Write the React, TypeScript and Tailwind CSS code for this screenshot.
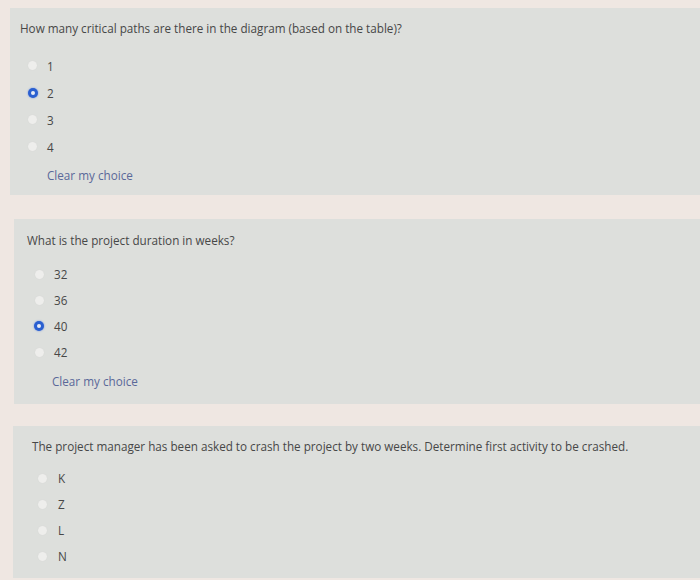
import React from "react";

function Radio({ checked }: { checked?: boolean }) {
  if (checked) {
    return (
      <span className="flex h-[10px] w-[10px] items-center justify-center rounded-full bg-[#2a5fd0] shadow-[0_0_2px_#6d8fe0]">
        <span className="h-[4px] w-[4px] rounded-full bg-[#e8ecf6]" />
      </span>
    );
  }
  return <span className="block h-[9px] w-[9px] rounded-full bg-[#eeeeec] shadow-[0_0_1px_#cfd0ce]" />;
}

export default function App() {
  return (
    <div
      className="flex h-[580px] w-[700px] flex-col bg-[#efe7e2] text-[11.7px] leading-[16px] text-[#474747]"
      style={{ fontFamily: "'Open Sans', 'Liberation Sans', sans-serif" }}
    >
      {/* Card 1 */}
      <div className="ml-[10px] mt-[8px] flex flex-col bg-[#dddfdc] pb-[12px] pl-[10px] pt-[12px]">
        <div>How many critical paths are there in the diagram (based on the table)?</div>
        <div className="mt-[16px] flex flex-col">
          {["1", "2", "3", "4"].map((l) => (
            <div key={l} className="flex h-[27px] items-center">
              <div className="flex w-[24px] justify-center pl-[1px]">
                <Radio checked={l === "2"} />
              </div>
              <span className="ml-[3px]">{l}</span>
            </div>
          ))}
        </div>
        <div className="ml-[27px] mt-[7px] text-[#5a6899]">Clear my choice</div>
      </div>

      {/* Card 2 */}
      <div className="ml-[14px] mt-[24px] flex flex-col bg-[#dddfdc] pb-[15px] pl-[13px] pt-[13px]">
        <div>What is the project duration in weeks?</div>
        <div className="mt-[13px] flex flex-col">
          {["32", "36", "40", "42"].map((l) => (
            <div key={l} className="flex h-[26px] items-center">
              <div className="flex w-[24px] justify-center">
                <Radio checked={l === "40"} />
              </div>
              <span className="ml-[3px]">{l}</span>
            </div>
          ))}
        </div>
        <div className="ml-[25px] mt-[8px] text-[#5a6899]">Clear my choice</div>
      </div>

      {/* Card 3 */}
      <div className="mb-[2px] ml-[13px] mt-[22px] flex flex-1 flex-col bg-[#dddfdc] pl-[19px] pt-[12px]">
        <div>The project manager has been asked to crash the project by two weeks. Determine first activity to be crashed.</div>
        <div className="mt-[11px] flex flex-col">
          {["K", "Z", "L", "N"].map((l) => (
            <div key={l} className="flex h-[26px] items-center">
              <div className="flex w-[21px] justify-center">
                <Radio />
              </div>
              <span className="ml-[5px]">{l}</span>
            </div>
          ))}
        </div>
      </div>
    </div>
  );
}
